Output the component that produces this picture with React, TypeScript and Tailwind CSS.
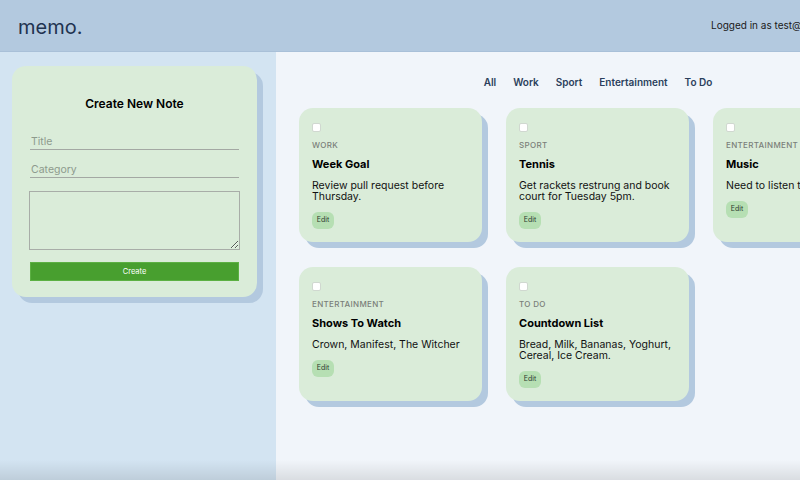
const notes = [
  { category: "Work", title: "Week Goal", body: "Review pull request before Thursday." },
  { category: "Sport", title: "Tennis", body: "Get rackets restrung and book court for Tuesday 5pm." },
  { category: "Entertainment", title: "Music", body: "Need to listen to new album." },
  { category: "Entertainment", title: "Shows To Watch", body: "Crown, Manifest, The Witcher" },
  { category: "To Do", title: "Countdown List", body: "Bread, Milk, Bananas, Yoghurt, Cereal, Ice Cream." },
];

const filters = ["All", "Work", "Sport", "Entertainment", "To Do"];

function NoteCard({ note }: { note: (typeof notes)[number] }) {
  return (
    <div className="flex flex-col items-start rounded-[14px] bg-[#daecd9] px-[13px] pt-[15px] pb-[13px] shadow-[6px_6px_0_#b3c9df]">
      <span className="block h-[9px] w-[9px] rounded-[2px] border border-[#d0d8d0] bg-white" />
      <p className="mt-[8px] text-[8px] leading-[10px] font-medium uppercase tracking-[0.04em] text-[#7a7f7a]">
        {note.category}
      </p>
      <h3 className="mt-[7px] text-[11px] leading-[14px] font-bold text-black">{note.title}</h3>
      <p className="mt-[9px] pr-[4px] text-[10.5px] leading-[11px] text-[#111]">{note.body}</p>
      <button className="mt-[10px] h-[17px] w-[22px] rounded-[6px] bg-[#b6dfb3] text-[7px] text-[#2d3b2d]">
        Edit
      </button>
    </div>
  );
}

export default function App() {
  return (
    <div className="relative h-[480px] w-[800px] overflow-hidden" style={{ fontFamily: "Inter, 'Noto Sans', sans-serif" }}>
      <div className="flex min-h-[480px] w-[918px] flex-col bg-[#f1f5fa]">
        {/* Header */}
        <header className="flex h-[52px] shrink-0 items-center border-b border-[#a9c0d8] bg-[#b3c9df]">
          <h1 className="pl-[18px] pt-[3px] text-[20px] leading-none text-[#1f3350]">memo.</h1>
          <p className="ml-auto w-[207px] text-[10px] text-[#1a1a1a]">Logged in as test@gmail.com</p>
        </header>

        <div className="flex flex-1">
          {/* Sidebar */}
          <aside className="w-[276px] shrink-0 bg-[#d3e4f2] pt-[14px] pl-[12px] pr-[19px]">
            <div className="flex h-[231px] flex-col rounded-[14px] bg-[#daecd9] px-[18px] pt-[30px] shadow-[6px_6px_0_#b3c9df]">
              <h2 className="text-center text-[12px] leading-[16px] font-semibold text-black">Create New Note</h2>
              <input
                placeholder="Title"
                className="mt-[21px] h-[17px] border-b-[1.5px] border-[#a3a8a3] bg-transparent px-[1px] text-[10.5px] text-black outline-none placeholder:text-[#8d9a8d]"
              />
              <input
                placeholder="Category"
                className="mt-[11px] h-[17px] border-b-[1.5px] border-[#a3a8a3] bg-transparent px-[1px] text-[10.5px] text-black outline-none placeholder:text-[#8d9a8d]"
              />
              <textarea className="-mx-[1px] mt-[13px] h-[59px] resize-y border border-[#a8ada8] bg-transparent outline-none" />
              <button className="mt-[12px] h-[19px] border border-[#5cb043] bg-[#489f2f] text-[7.5px] text-white">
                Create
              </button>
            </div>
          </aside>

          {/* Main */}
          <main className="flex-1 px-[23px] pt-[21px]">
            <nav className="flex justify-center gap-[17px] pl-[1px]">
              {filters.map((f) => (
                <button key={f} className="text-[10px] leading-[18px] font-semibold text-[#2b3f5c]">
                  {f}
                </button>
              ))}
            </nav>
            <div className="mt-[17px] grid grid-cols-[183px_183px_183px] gap-x-[24px] gap-y-[25px]">
              {notes.map((n) => (
                <NoteCard key={n.title} note={n} />
              ))}
            </div>
          </main>
        </div>
      </div>
      <div className="pointer-events-none absolute inset-x-0 bottom-0 h-[20px] bg-gradient-to-b from-transparent to-black/10" />
    </div>
  );
}
